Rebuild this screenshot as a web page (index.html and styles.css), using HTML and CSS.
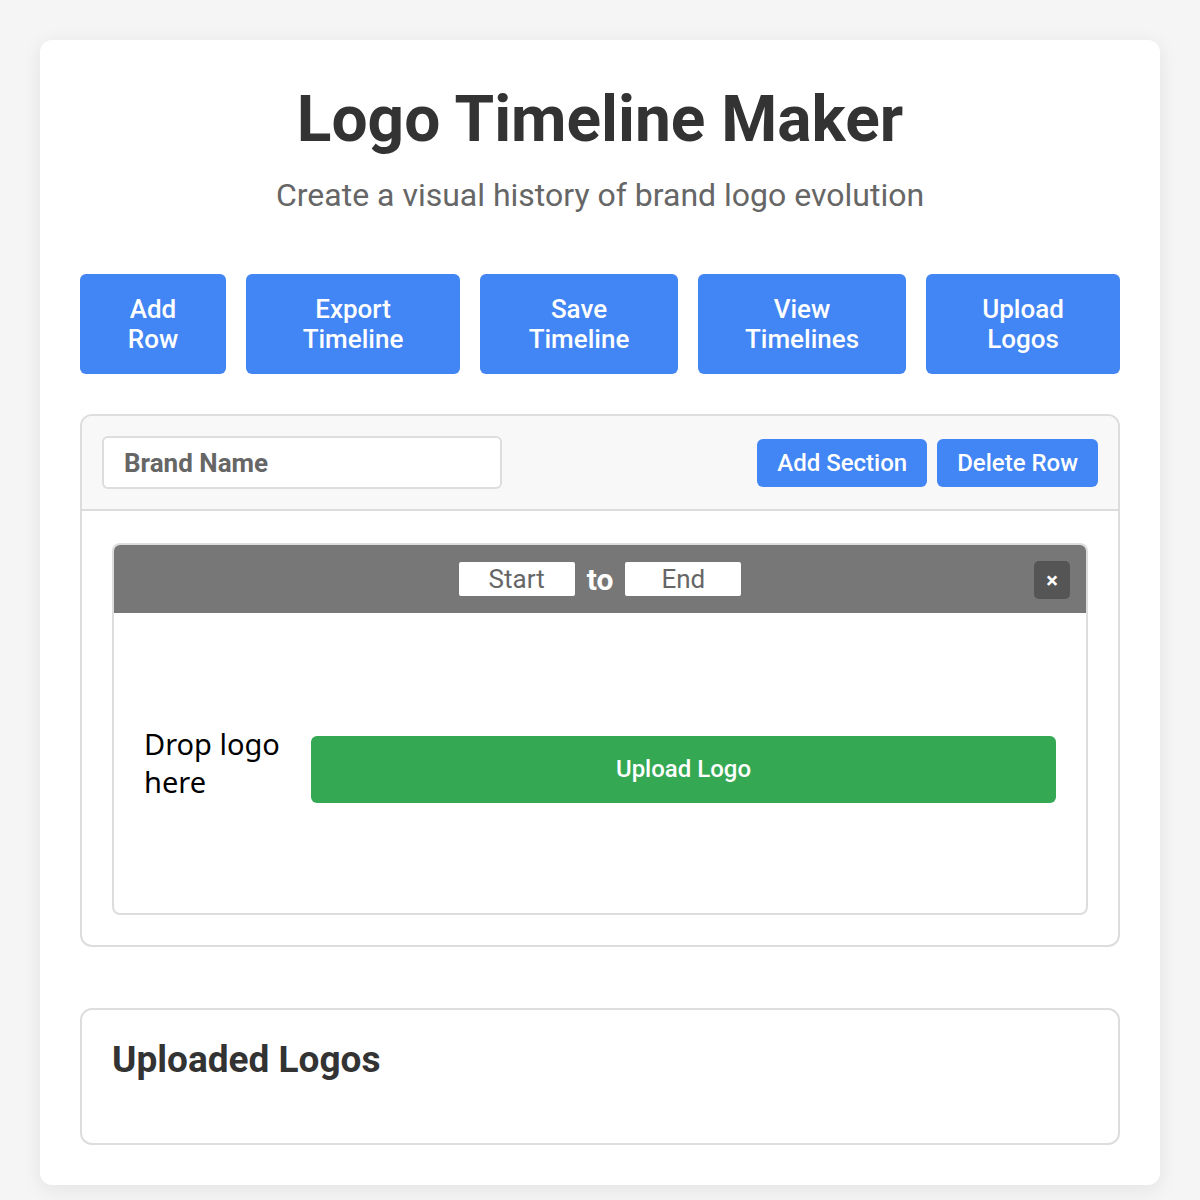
FILE: index.html
```html
<!DOCTYPE html>
<html>
<head>
    <meta charset="UTF-8">
    <title>Logo Timeline Maker</title>
    <link rel="stylesheet" href="styles.css">
</head>
<body>
    <div class="container">
        <h1>Logo Timeline Maker</h1>
        <p class="subtitle">Create a visual history of brand logo evolution</p>

        <div class="toolbar">
            <button class="main-btn">Add Row</button>
            <button class="main-btn">Export Timeline</button>
            <button class="main-btn">Save Timeline</button>
            <button class="main-btn">View Timelines</button>
            <button class="main-btn">Upload Logos</button>
        </div>

        <div class="timeline-row">
            <div class="row-header">
                <input type="text" class="brand-input" placeholder="Brand Name">
                <div class="row-actions">
                    <button class="small-btn">Add Section</button>
                    <button class="small-btn">Delete Row</button>
                </div>
            </div>
            <div class="row-body">
                <div class="section">
                    <div class="section-header">
                        <input type="text" class="year-input" placeholder="Start">
                        <span class="to-label">to</span>
                        <input type="text" class="year-input" placeholder="End">
                        <button class="close-btn">×</button>
                    </div>
                    <div class="drop-zone">
                        <div class="drop-text">Drop logo here</div>
                        <button class="upload-btn">Upload Logo</button>
                    </div>
                </div>
            </div>
        </div>

        <div class="uploaded">
            <h3>Uploaded Logos</h3>
        </div>
    </div>
</body>
</html>
```

FILE: styles.css
```css
body {
    background: #f5f5f5;
    font-family: Roboto, "Liberation Sans", sans-serif;
    margin: 0;
    padding: 40px;
    color: #333;
}

.container {
    background: #fff;
    border-radius: 12px;
    padding: 40px;
    box-shadow: 0 4px 20px rgba(0, 0, 0, 0.08);
}

h1 {
    margin: 0;
    text-align: center;
    font-size: 64px;
    line-height: 80px;
    font-weight: 700;
    color: #333;
}

.subtitle {
    margin: 18px 0 0;
    text-align: center;
    font-size: 32px;
    line-height: 35px;
    color: #666;
}

.toolbar {
    display: grid;
    grid-template-columns: 146px 214px 198px 208px 194px;
    gap: 20px;
    margin-top: 61px;
}

button {
    border: none;
    cursor: pointer;
    font-family: Roboto, "Liberation Sans", sans-serif;
    color: #fff;
}

.main-btn {
    height: 100px;
    background: #4285f4;
    border-radius: 6px;
    font-size: 26px;
    line-height: 30px;
    font-weight: 500;
    padding: 0 30px;
}

.timeline-row {
    margin-top: 40px;
    border: 2px solid #ddd;
    border-radius: 12px;
    overflow: hidden;
}

.row-header {
    display: flex;
    justify-content: space-between;
    align-items: center;
    padding: 20px;
    background: #f8f8f8;
    border-bottom: 2px solid #ddd;
}

.brand-input {
    width: 400px;
    height: 53px;
    box-sizing: border-box;
    padding: 0 20px;
    border: 2px solid #ddd;
    border-radius: 6px;
    font-family: Roboto, "Liberation Sans", sans-serif;
    font-size: 26px;
    font-weight: 700;
    color: #333;
}

.brand-input::placeholder {
    color: #666;
}

.row-actions {
    display: flex;
    gap: 10px;
}

.small-btn {
    height: 48px;
    padding: 0 20px;
    background: #4285f4;
    border-radius: 6px;
    font-size: 24px;
    font-weight: 500;
}

.row-body {
    padding: 32px 30px 30px;
}

.section {
    border: 2px solid #ddd;
    border-radius: 8px;
    overflow: hidden;
}

.section-header {
    position: relative;
    display: flex;
    justify-content: center;
    align-items: center;
    height: 68px;
    background: #777;
}

.year-input {
    width: 116px;
    height: 34px;
    box-sizing: border-box;
    border: none;
    border-radius: 2px;
    text-align: center;
    font-family: Roboto, "Liberation Sans", sans-serif;
    font-size: 26px;
    color: #333;
}

.year-input::placeholder {
    color: #666;
}

.to-label {
    margin: 0 12px;
    font-size: 30px;
    font-weight: 700;
    color: #fff;
}

.close-btn {
    position: absolute;
    right: 16px;
    top: 16px;
    width: 36px;
    height: 38px;
    background: #555;
    border-radius: 5px;
    font-size: 22px;
    font-weight: 700;
    padding: 0;
}

.drop-zone {
    display: flex;
    align-items: center;
    gap: 30px;
    height: 300px;
    padding: 0 30px;
}

.drop-text {
    width: 137px;
    font-family: "Noto Sans", "Open Sans", sans-serif;
    font-size: 29px;
    line-height: 38px;
    color: #000;
}

.upload-btn {
    flex: 1;
    height: 67px;
    margin-top: 12px;
    background: #34a853;
    border-radius: 6px;
    font-size: 24px;
    font-weight: 500;
}

.uploaded {
    margin-top: 61px;
    border: 2px solid #ddd;
    border-radius: 12px;
    padding: 30px;
}

.uploaded h3 {
    margin: 0 0 33px;
    font-size: 37px;
    line-height: 40px;
    font-weight: 700;
    color: #333;
}
```
